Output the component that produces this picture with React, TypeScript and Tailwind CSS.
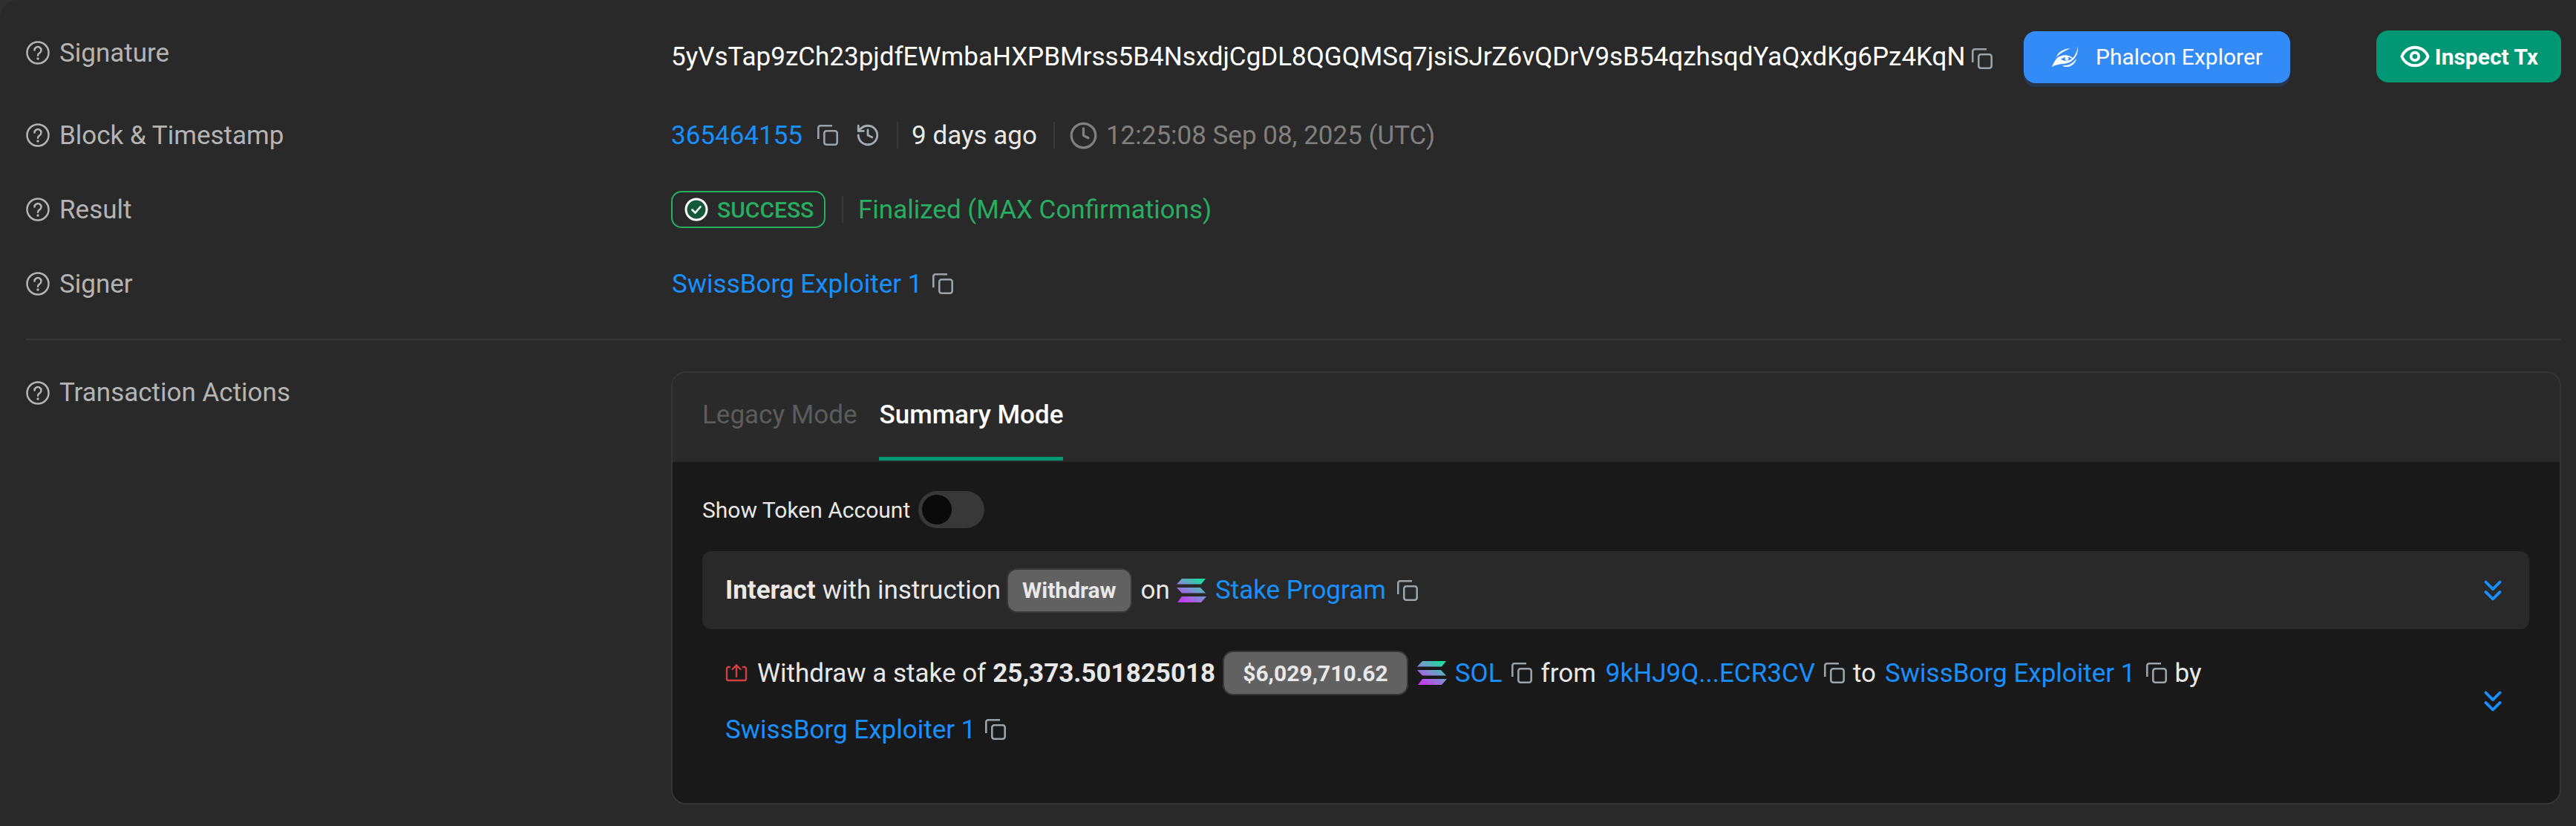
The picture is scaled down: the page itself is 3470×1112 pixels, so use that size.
import React from "react";
import { ChevronsDown, Clock, Eye, History } from "lucide-react";

const CopyIcon = ({ className = "" }: { className?: string }) => (
    <svg viewBox="0 0 28 28" fill="none" stroke="#9ca3a8" strokeWidth="2.6" className={`w-[28px] h-[28px] shrink-0 ${className}`}>
        <rect x="9.3" y="8.3" width="17.4" height="18.4" rx="3" />
        <path d="M1.3 19V4a2.7 2.7 0 0 1 2.7-2.7h16" />
    </svg>
);

const HelpIcon = () => (
    <svg viewBox="0 0 32 32" fill="none" className="w-[32px] h-[32px] shrink-0">
        <circle cx="16" cy="16" r="14.5" stroke="#b4b4b4" strokeWidth="2.5" />
        <path d="M11.5 12.5a4.5 4.5 0 1 1 6.8 3.9c-1.5.9-2.3 1.7-2.3 3.4" stroke="#b4b4b4" strokeWidth="2.5" strokeLinecap="round" />
        <circle cx="16" cy="24" r="1.7" fill="#b4b4b4" />
    </svg>
);

const SolanaIcon = ({ id }: { id: string }) => (
    <svg viewBox="0 0 40 32" className="w-[40px] h-[32px] shrink-0">
        <defs>
            <linearGradient id={id} x1="30" y1="0" x2="10" y2="32" gradientUnits="userSpaceOnUse">
                <stop offset="0" stopColor="#1fdca0" />
                <stop offset="0.5" stopColor="#7f8fd0" />
                <stop offset="1" stopColor="#c43cf0" />
            </linearGradient>
        </defs>
        <path d="M7 0h32l-6 7.5H0z" fill={`url(#${id})`} />
        <path d="M0 12h32l7 7.5H7z" fill={`url(#${id})`} />
        <path d="M7 24h33l-7 8H1z" fill={`url(#${id})`} />
    </svg>
);

const PhalconIcon = () => (
    <svg viewBox="0 0 35 29" className="w-[35px] h-[29px] shrink-0">
        <path d="M6 15C8 8 15 4 25 3C19 6 13 8 6 15z" fill="#fff" />
        <path d="M35 0C34 7 32 12 28 16C22 11 13 11 6 17C4 20 2 23 0 28C6 25 11 24 15 24C23 24 31 19 34 10C35 7 35 3 35 0z" fill="#fff" />
        <path d="M12 18C17 14 23 14 27 17C23 20 17 21 12 18z" fill="#338bf8" />
        <circle cx="20" cy="17" r="2.4" fill="#fff" />
        <path d="M14 26C21 27 28 24 33 17C32 23 26 29 17 28z" fill="#fff" />
    </svg>
);

const SuccessIcon = () => (
    <svg viewBox="0 0 32 32" className="w-[32px] h-[32px] shrink-0" fill="none">
        <circle cx="16" cy="16" r="14" fill="#14593a" stroke="#fff" strokeWidth="3" />
        <path d="M10.5 16.5l4 4 7-8" stroke="#fff" strokeWidth="2.6" strokeLinecap="round" strokeLinejoin="round" />
    </svg>
);

const WithdrawIcon = () => (
    <svg viewBox="0 0 30 24" className="w-[30px] h-[24px] shrink-0" fill="none" stroke="#d04040" strokeWidth="2.4">
        <path d="M7 4H4a2 2 0 0 0-2 2v14a2 2 0 0 0 2 2h22a2 2 0 0 0 2-2V6a2 2 0 0 0-2-2h-3" />
        <path d="M15 17V1.5M9.5 7l5.5-5.5L20.500 7" strokeLinecap="round" strokeLinejoin="round" />
    </svg>
);

const Separator = ({ className = "" }: { className?: string }) => <div className={`w-[2px] h-[36px] bg-[#383838] ${className}`} />;

const Link = ({ children }: { children: React.ReactNode }) => <span className="text-[#1890ff]">{children}</span>;

const Label = ({ children, className = "" }: { children: React.ReactNode; className?: string }) => (
    <div className={`w-[869px] shrink-0 flex items-center gap-[13px] text-[#b4b4b4] ${className}`}>
        <HelpIcon />
        {children}
    </div>
);

const Chevrons = () => <ChevronsDown className="w-[46px] h-[46px] shrink-0 text-[#1890ff]" strokeWidth={2} />;

export default function App() {
    return (
        <div className="w-[3470px] h-[1112px] overflow-hidden bg-[#2f2f2f] text-[35px] leading-[41px] font-['Roboto',sans-serif]">
            <div className="h-full rounded-tl-[24px] bg-[#292929] pl-[35px] pr-[20px] pt-[41px]">
                <div className="h-[70px] flex items-center">
                    <Label className="mb-[10px]">Signature</Label>
                    <span className="text-white">5yVsTap9zCh23pjdfEWmbaHXPBMrss5B4NsxdjCgDL8QGQMSq7jsiSJrZ6vQDrV9sB54qzhsqdYaQxdKg6Pz4KqN</span>
                    <CopyIcon className="ml-[9px] mt-[6px]" />
                    <div className="ml-[42px] w-[359px] h-[70px] mt-[1px] rounded-[16px] bg-[#338bf8] shadow-[0_5px_0_#25374d] flex items-center justify-center gap-[24px] text-white text-[30px]">
                        <PhalconIcon />
                        Phalcon Explorer
                    </div>
                    <div className="ml-auto w-[249px] h-[70px] rounded-[16px] bg-[#009874] flex items-center justify-center gap-[6px] text-white text-[30px] font-bold">
                        <Eye className="w-[42px] h-[42px]" strokeWidth={2.2} />
                        Inspect Tx
                    </div>
                </div>
                <div className="h-[100px] mt-[21px] flex items-center">
                    <Label>Block &amp; Timestamp</Label>
                    <Link>365464155</Link>
                    <CopyIcon className="ml-[20px]" />
                    <History className="w-[34px] h-[34px] ml-[23px] text-[#a3adb2]" strokeWidth={2} />
                    <Separator className="ml-[22px]" />
                    <span className="ml-[18px] text-[#e8e8e8]">9 days ago</span>
                    <Separator className="ml-[22px]" />
                    <Clock className="w-[39px] h-[39px] ml-[19px] text-[#808080]" strokeWidth={2} />
                    <span className="ml-[11px] text-[#808080]">12:25:08 Sep 08, 2025 (UTC)</span>
                </div>
                <div className="h-[100px] flex items-center">
                    <Label>Result</Label>
                    <div className="w-[208px] h-[50px] border-2 border-[#27ae60] rounded-[14px] flex items-center pl-[16px] gap-[12px] text-[30px] font-medium text-[#27ae60]">
                        <SuccessIcon />
                        SUCCESS
                    </div>
                    <Separator className="ml-[22px]" />
                    <span className="ml-[20px] text-[#27ae60]">Finalized (MAX Confirmations)</span>
                </div>
                <div className="h-[100px] flex items-center">
                    <Label>Signer</Label>
                    <span className="ml-[1px]"><Link>SwissBorg Exploiter 1</Link></span>
                    <CopyIcon className="ml-[14px]" />
                </div>
                <div className="h-[2px] mt-[24px] bg-[#383838]" />
                <div className="flex items-start mt-[42px]">
                    <div className="pt-[8px]">
                        <Label>Transaction Actions</Label>
                    </div>
                    <div className="flex-1 h-[583px] rounded-[20px] border-2 border-[#353535] overflow-hidden flex flex-col">
                        <div className="h-[120px] shrink-0 flex items-end pl-[40px] gap-[30px] border-b-2 border-[#262626] bg-[#2a2a2a]">
                            <span className="h-[119px] flex items-center text-[#5c5c5c] pb-[5px]">Legacy Mode</span>
                            <span className="h-[119px] flex items-center font-medium text-white border-b-[5px] border-[#009874]">Summary Mode</span>
                        </div>
                        <div className="flex-1 bg-[#191919] pl-[40px] pr-[41px] pt-[39px]">
                            <div className="flex items-center h-[50px] gap-[11px] text-[#e8e8e8] text-[30px]">
                                Show Token Account
                                <div className="w-[89px] h-[50px] rounded-full bg-[#383838] flex items-center pl-[5px]">
                                    <div className="w-[40px] h-[40px] rounded-full bg-[#0a0a0a]" />
                                </div>
                            </div>
                            <div className="mt-[31px] h-[105px] rounded-[12px] bg-[#292929] flex items-center pl-[31px] pr-[26px] text-[#e8e8e8]">
                                <span className="font-bold">Interact</span>
                                <span className="ml-[9px]">with instruction</span>
                                <span className="ml-[8px] h-[60px] px-[19px] flex items-center rounded-[14px] bg-[#616161] border-2 border-[#383838] text-[30px] font-bold">Withdraw</span>
                                <span className="ml-[12px]">on</span>
                                <span className="ml-[9px] flex"><SolanaIcon id="sol-a" /></span>
                                <span className="ml-[12px]"><Link>Stake Program</Link></span>
                                <CopyIcon className="ml-[15px]" />
                                <div className="ml-auto"><Chevrons /></div>
                            </div>
                            <div className="mt-[21px] flex items-center pl-[31px] pr-[26px] text-[#e8e8e8]">
                                <div className="flex-1">
                                    <div className="h-[76px] flex items-center">
                                        <WithdrawIcon />
                                        <span className="ml-[13px]">Withdraw a stake of</span>
                                        <span className="ml-[9px] font-bold">25,373.501825018</span>
                                        <span className="ml-[10px] h-[60px] px-[25px] flex items-center rounded-[14px] bg-[#616161] border-2 border-[#383838] text-[30px] font-bold">$6,029,710.62</span>
                                        <span className="ml-[12px] flex"><SolanaIcon id="sol-b" /></span>
                                        <span className="ml-[11px]"><Link>SOL</Link></span>
                                        <CopyIcon className="ml-[12px]" />
                                        <span className="ml-[12px]">from</span>
                                        <span className="ml-[13px]"><Link>9kHJ9Q...ECR3CV</Link></span>
                                        <CopyIcon className="ml-[12px]" />
                                        <span className="ml-[11px]">to</span>
                                        <span className="ml-[12px]"><Link>SwissBorg Exploiter 1</Link></span>
                                        <CopyIcon className="ml-[14px]" />
                                        <span className="ml-[11px]">by</span>
                                    </div>
                                    <div className="h-[76px] flex items-center">
                                        <Link>SwissBorg Exploiter 1</Link>
                                        <CopyIcon className="ml-[13px]" />
                                    </div>
                                </div>
                                <Chevrons />
                            </div>
                        </div>
                    </div>
                </div>
            </div>
        </div>
    );
}
